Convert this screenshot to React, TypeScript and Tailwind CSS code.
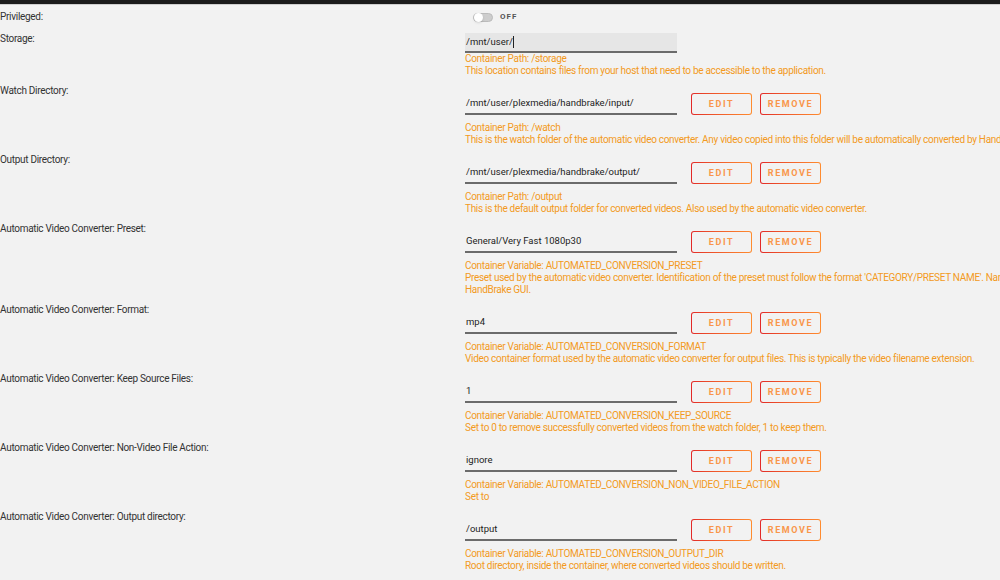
import React from 'react';

interface Setting {
    label: string;
    value: string;
    kind: string;
    help: string[];
}

const SETTINGS: Setting[] = [
    {
        label: 'Watch Directory:',
        value: '/mnt/user/plexmedia/handbrake/input/',
        kind: 'Container Path: /watch',
        help: ['This is the watch folder of the automatic video converter. Any video copied into this folder will be automatically converted by HandBrake.'],
    },
    {
        label: 'Output Directory:',
        value: '/mnt/user/plexmedia/handbrake/output/',
        kind: 'Container Path: /output',
        help: ['This is the default output folder for converted videos. Also used by the automatic video converter.'],
    },
    {
        label: 'Automatic Video Converter: Preset:',
        value: 'General/Very Fast 1080p30',
        kind: 'Container Variable: AUTOMATED_CONVERSION_PRESET',
        help: [
            "Preset used by the automatic video converter. Identification of the preset must follow the format 'CATEGORY/PRESET NAME'. Names of presets can be found in the",
            'HandBrake GUI.',
        ],
    },
    {
        label: 'Automatic Video Converter: Format:',
        value: 'mp4',
        kind: 'Container Variable: AUTOMATED_CONVERSION_FORMAT',
        help: ['Video container format used by the automatic video converter for output files. This is typically the video filename extension.'],
    },
    {
        label: 'Automatic Video Converter: Keep Source Files:',
        value: '1',
        kind: 'Container Variable: AUTOMATED_CONVERSION_KEEP_SOURCE',
        help: ['Set to 0 to remove successfully converted videos from the watch folder, 1 to keep them.'],
    },
    {
        label: 'Automatic Video Converter: Non-Video File Action:',
        value: 'ignore',
        kind: 'Container Variable: AUTOMATED_CONVERSION_NON_VIDEO_FILE_ACTION',
        help: ['Set to'],
    },
    {
        label: 'Automatic Video Converter: Output directory:',
        value: '/output',
        kind: 'Container Variable: AUTOMATED_CONVERSION_OUTPUT_DIR',
        help: ['Root directory, inside the container, where converted videos should be written.'],
    },
];

const OutlineButton: React.FC<{ label: string }> = ({ label }) => (
    <div className="w-[61px] h-[22px] rounded-[3px] p-[1px] bg-gradient-to-r from-[#e22828] to-[#ff8c2f]">
        <div className="w-full h-full rounded-[2px] bg-[#f2f2f2] flex items-center justify-center">
            <span className="text-[9px] font-bold tracking-[1.6px] text-[#f9964a] leading-none">{label}</span>
        </div>
    </div>
);

const HelpText: React.FC<{ kind: string; help: string[] }> = ({ kind, help }) => (
    <div className="text-[10px] leading-[12px] tracking-[-0.3px] text-[#f39a22] whitespace-nowrap">
        <div>{kind}</div>
        {help.map((line, i) => (
            <div key={i}>{line}</div>
        ))}
    </div>
);

const Label: React.FC<{ text: string }> = ({ text }) => (
    <div className="w-[465px] shrink-0 text-[10px] leading-[14px] tracking-[-0.3px] text-[#333]">{text}</div>
);

const SettingRow: React.FC<{ setting: Setting }> = ({ setting }) => (
    <div className="flex">
        <Label text={setting.label} />
        <div className="pt-[9px] pb-[7px]">
            <div className="flex items-center h-[22px]">
                <div className="w-[212px] h-[22px] flex items-center pl-[1px] border-b-2 border-[#6b6b6b] text-[9.5px] text-[#222]">
                    {setting.value}
                </div>
                <div className="flex gap-[8px] ml-[14px]">
                    <OutlineButton label="EDIT" />
                    <OutlineButton label="REMOVE" />
                </div>
            </div>
            <div className="mt-[7px]">
                <HelpText kind={setting.kind} help={setting.help} />
            </div>
        </div>
    </div>
);

const App: React.FC = () => {
    return (
        <div
            className="w-[1000px] h-[580px] overflow-hidden bg-[#f2f2f2]"
            style={{ fontFamily: 'Roboto, "Noto Sans", sans-serif' }}
        >
            <div className="h-[5px] bg-[#1c1c1c] border-b border-[#cfcfcf]" />
            <div className="pt-[5px]">
                <div className="flex h-[22px]">
                    <Label text="Privileged:" />
                    <div className="flex items-center gap-[7px] pl-[8px] h-[14px]">
                        <div className="w-[20px] h-[9px] rounded-full bg-[#cdcdcd] border border-[#bbb] flex items-center">
                            <div className="w-[9px] h-[9px] rounded-full bg-white shadow-sm" />
                        </div>
                        <span className="text-[8px] font-bold tracking-[1px] text-[#555]">OFF</span>
                    </div>
                </div>
                <div className="flex">
                    <Label text="Storage:" />
                    <div className="pt-[1px] pb-[7px]">
                        <div className="w-[212px] h-[20px] bg-[#e6e6e6] border-b-2 border-[#6b6b6b] flex items-center pl-[1px] text-[9.5px] text-[#222]">
                            /mnt/user/
                            <span className="w-px h-[12px] bg-[#222]" />
                        </div>
                        <HelpText
                            kind="Container Path: /storage"
                            help={['This location contains files from your host that need to be accessible to the application.']}
                        />
                    </div>
                </div>
                {SETTINGS.map((s) => (
                    <SettingRow key={s.label} setting={s} />
                ))}
            </div>
        </div>
    );
};

export default App;
